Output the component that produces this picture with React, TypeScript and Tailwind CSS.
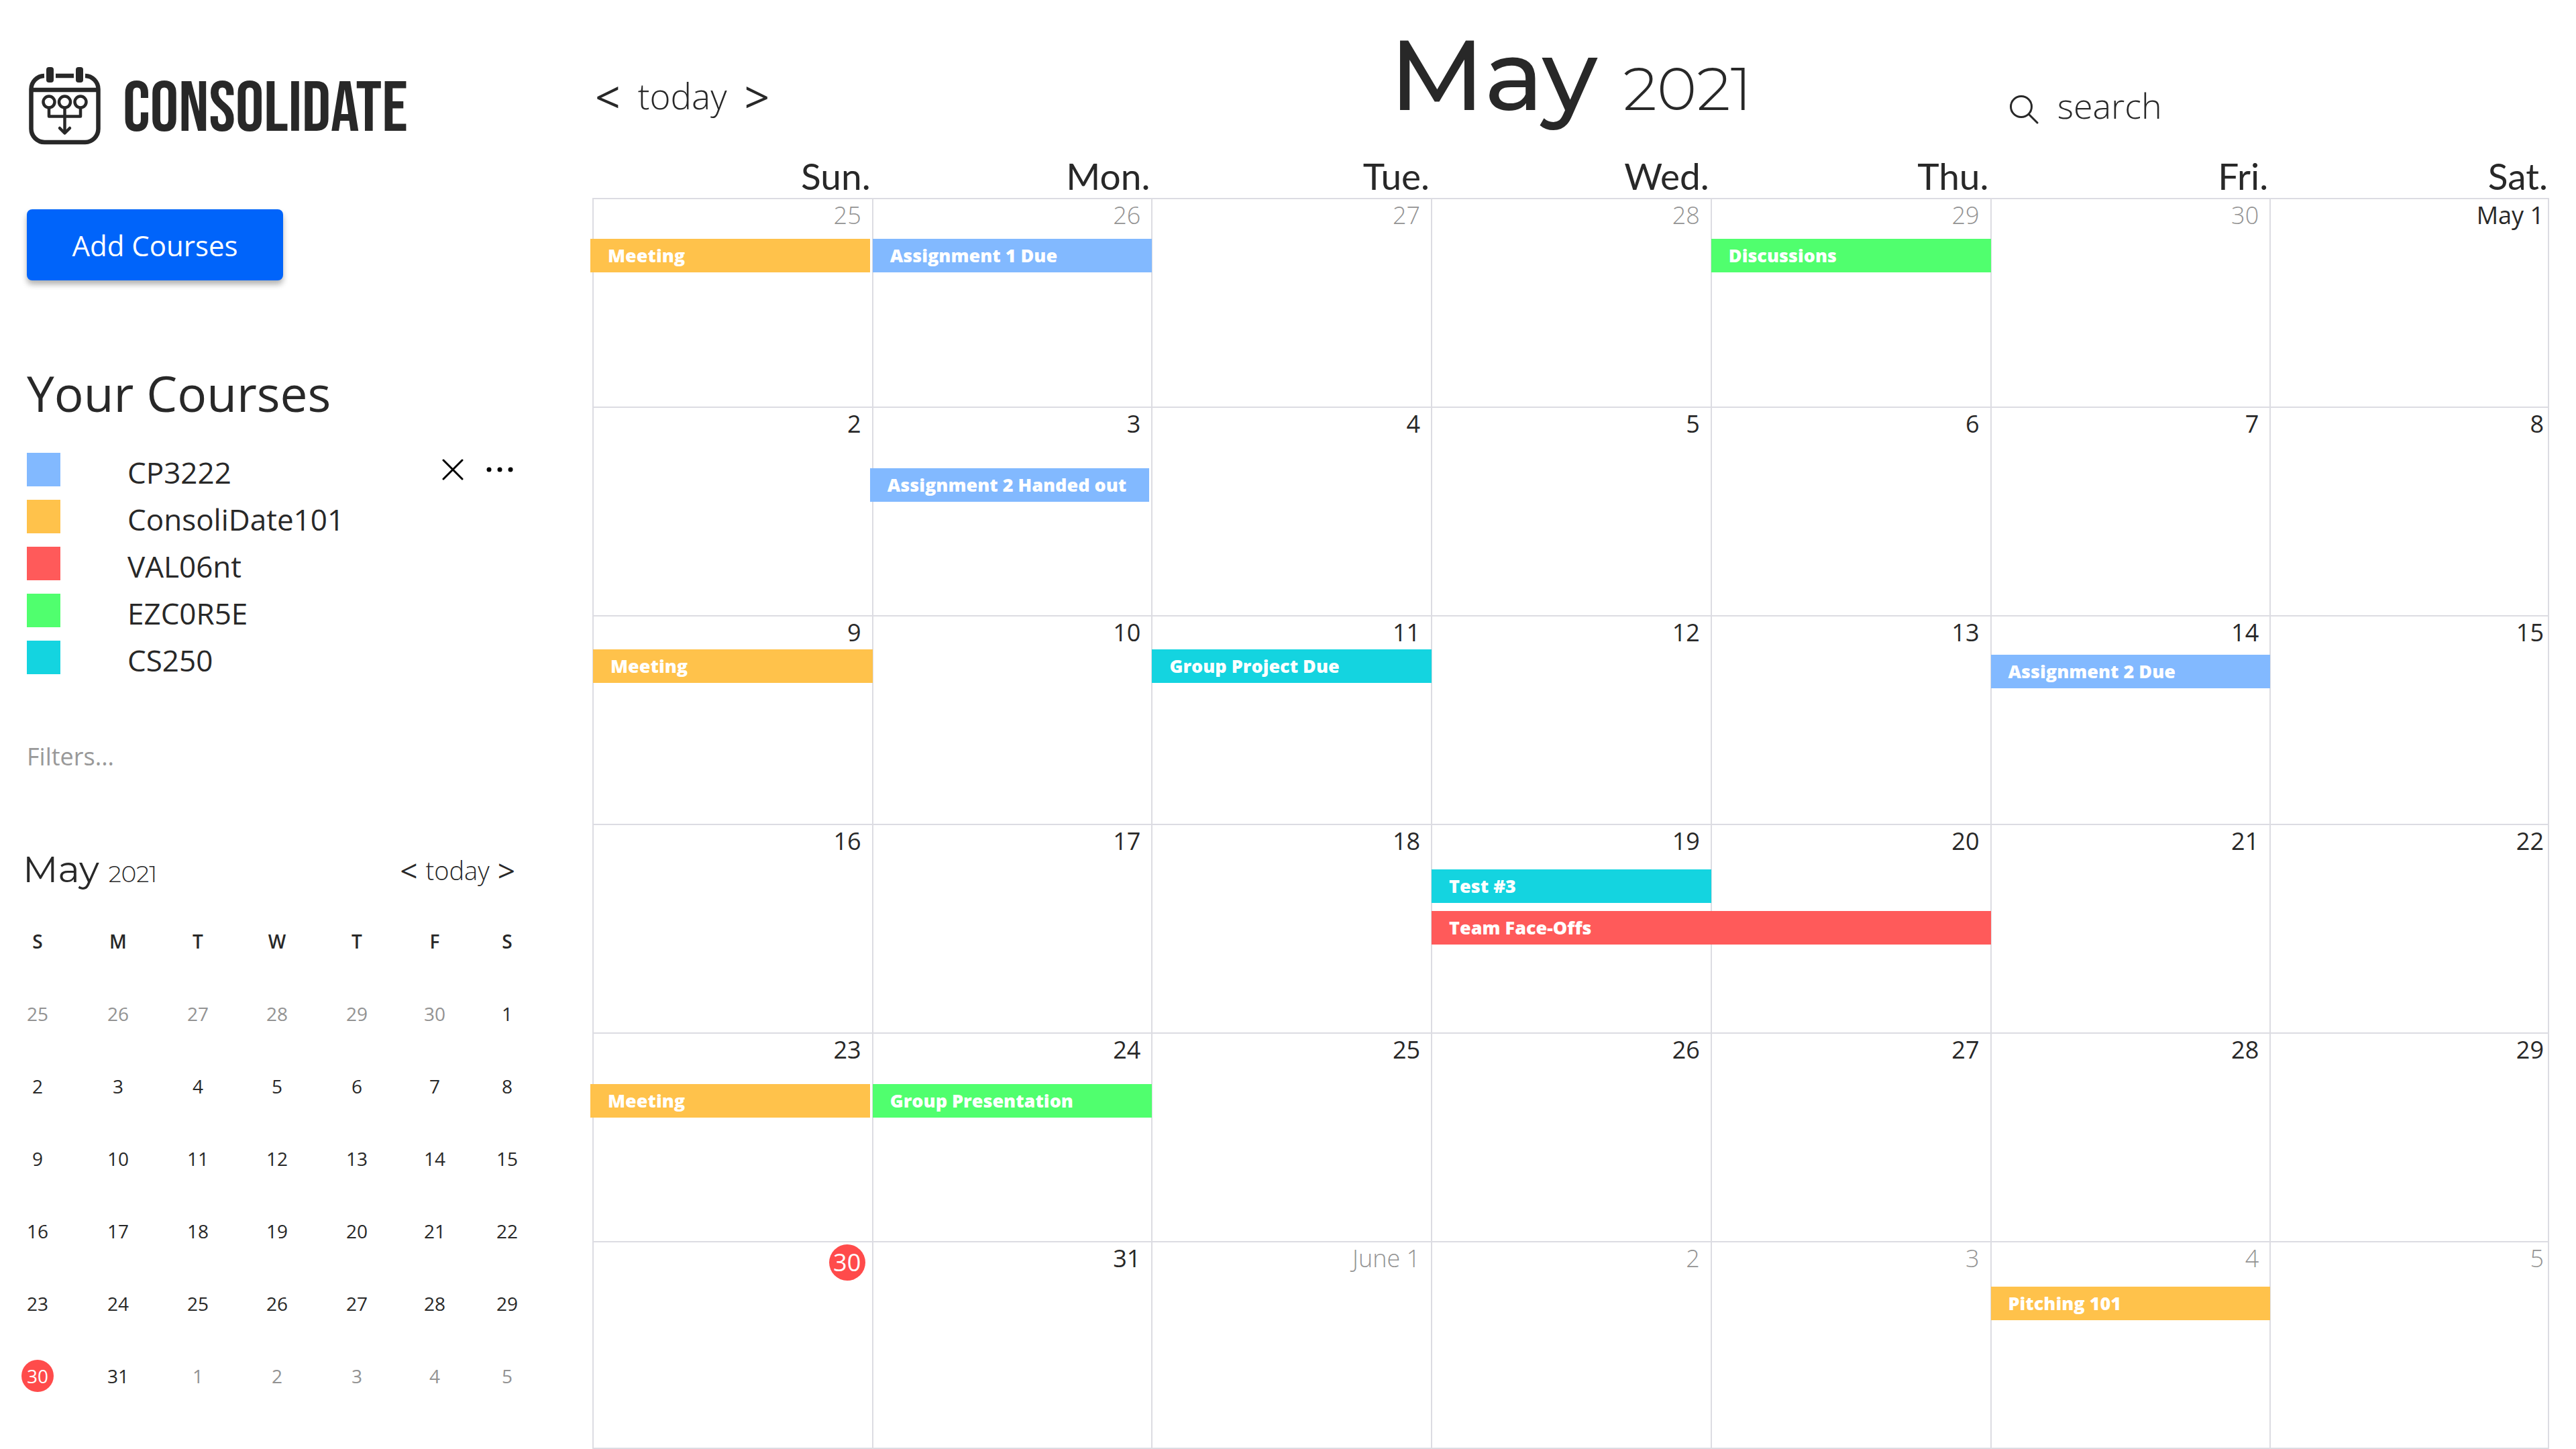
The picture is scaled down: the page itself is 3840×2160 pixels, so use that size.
type Tone = "blue" | "amber" | "red" | "green" | "teal";
type CalEvent = { title: string; tone: Tone; top: string; early?: boolean; wide?: boolean };
type Day = { label: string; muted?: boolean; today?: boolean; events?: CalEvent[] };

const tones: Record<Tone, string> = {
  blue: "bg-[#82b9ff]",
  amber: "bg-[#ffc24b]",
  red: "bg-[#ff5a5a]",
  green: "bg-[#50ff6e]",
  teal: "bg-[#14d4e0]",
};

const courses: { name: string; tone: Tone }[] = [
  { name: "CP3222", tone: "blue" },
  { name: "ConsoliDate101", tone: "amber" },
  { name: "VAL06nt", tone: "red" },
  { name: "EZC0R5E", tone: "green" },
  { name: "CS250", tone: "teal" },
];

const weekdays = ["Sun.", "Mon.", "Tue.", "Wed.", "Thu.", "Fri.", "Sat."];

const d = (label: string | number, ...events: CalEvent[]): Day => ({ label: String(label), events });
const m = (label: string | number, ...events: CalEvent[]): Day => ({ label: String(label), muted: true, events });

const weeks: Day[][] = [
  [
    m(25, { title: "Meeting", tone: "amber", top: "mt-[11px]", early: true }),
    m(26, { title: "Assignment 1 Due", tone: "blue", top: "mt-[11px]" }),
    m(27),
    m(28),
    m(29, { title: "Discussions", tone: "green", top: "mt-[11px]" }),
    m(30),
    d("May 1"),
  ],
  [d(2), d(3, { title: "Assignment 2 Handed out", tone: "blue", top: "mt-[42px]", early: true }), d(4), d(5), d(6), d(7), d(8)],
  [
    d(9, { title: "Meeting", tone: "amber", top: "mt-px" }),
    d(10),
    d(11, { title: "Group Project Due", tone: "teal", top: "mt-px" }),
    d(12),
    d(13),
    d(14, { title: "Assignment 2 Due", tone: "blue", top: "mt-[9px]" }),
    d(15),
  ],
  [
    d(16),
    d(17),
    d(18),
    d(
      19,
      { title: "Test #3", tone: "teal", top: "mt-[18px]" },
      { title: "Team Face-Offs", tone: "red", top: "mt-3", wide: true },
    ),
    d(20),
    d(21),
    d(22),
  ],
  [
    d(23, { title: "Meeting", tone: "amber", top: "mt-[27px]", early: true }),
    d(24, { title: "Group Presentation", tone: "green", top: "mt-[27px]" }),
    d(25),
    d(26),
    d(27),
    d(28),
    d(29),
  ],
  [
    { label: "30", today: true },
    d(31),
    m("June 1"),
    m(2),
    m(3),
    m(4, { title: "Pitching 101", tone: "amber", top: "mt-[18px]" }),
    m(5),
  ],
];

function LogoMark() {
  return (
    <svg viewBox="0 0 108 118" className="h-[118px] w-[108px] shrink-0" fill="none" stroke="#282828" aria-hidden="true">
      <path d="M23 14 A20 20 0 0 0 3.5 34 V93 A20 20 0 0 0 23.5 113 H84 A20 20 0 0 0 103.5 93 V34 A20 20 0 0 0 84 14" strokeWidth="6.5" />
      <path d="M40 14 H67" strokeWidth="6.5" />
      <path d="M3 35 H104" strokeWidth="6.5" />
      <rect x="26" y="1" width="11" height="23" rx="4" fill="#282828" stroke="none" />
      <rect x="70" y="1" width="11" height="23" rx="4" fill="#282828" stroke="none" />
      <circle cx="30" cy="53" r="8.5" strokeWidth="4.5" />
      <circle cx="53.5" cy="53" r="8.5" strokeWidth="4.5" />
      <circle cx="77" cy="53" r="8.5" strokeWidth="4.5" />
      <path d="M30 62 V74.5 H77 V62 M53.5 62 V98" strokeWidth="4.5" strokeLinejoin="round" />
      <path d="M46 92 L53.5 99.5 L61 92" strokeWidth="4.5" strokeLinecap="round" strokeLinejoin="round" />
    </svg>
  );
}

function SearchIcon() {
  return (
    <svg viewBox="0 0 44 44" className="mt-4 size-11 shrink-0" fill="none" stroke="currentColor" strokeWidth="3" strokeLinecap="round" aria-hidden="true">
      <circle cx="18" cy="18" r="15.5" />
      <path d="M29.5 29.5 L42 42" />
    </svg>
  );
}

function Sidebar() {
  return (
    <aside className="w-[884px] shrink-0">
      <div className="mt-[99px] flex h-[118px] items-center gap-8 pl-[43px]">
        <LogoMark />
        <span className="pt-3 font-['Bebas_Neue','Roboto_Condensed','Liberation_Sans_Narrow',sans-serif] text-[106px] leading-[118px]">
          CONSOLIDATE
        </span>
      </div>

      <button
        type="button"
        className="ml-10 mt-[95px] block h-[106px] w-[382px] rounded-lg bg-[#0064fa] text-[42px] text-white shadow-[0_6px_8px_rgba(0,0,0,0.3)]"
      >
        Add Courses
      </button>

      <h2 className="ml-10 mt-[118px] text-[73px] leading-[100px]">Your Courses</h2>

      <ul className="ml-10 mt-[39px] flex w-[725px] flex-col gap-5">
        {courses.map((course, i) => (
          <li key={course.name} className="flex h-[50px] items-center">
            <span className={`size-[50px] ${tones[course.tone]}`} />
            <span className="ml-[100px] mt-2 flex-1 text-[44px] leading-none">{course.name}</span>
            {i === 0 && (
              <span className="flex items-center gap-[34px] text-black">
                <button type="button" aria-label="Remove course">
                  <svg viewBox="0 0 32 32" className="size-8" stroke="currentColor" strokeWidth="3" strokeLinecap="round">
                    <path d="M2 2 L30 30 M30 2 L2 30" />
                  </svg>
                </button>
                <button type="button" aria-label="More options">
                  <svg viewBox="0 0 40 8" className="h-2 w-10" fill="currentColor">
                    <circle cx="4" cy="4" r="3.5" />
                    <circle cx="20" cy="4" r="3.5" />
                    <circle cx="36" cy="4" r="3.5" />
                  </svg>
                </button>
              </span>
            )}
          </li>
        ))}
      </ul>

      <button type="button" className="ml-10 mt-[98px] block text-4xl leading-[50px] text-[#999999]">
        Filters...
      </button>

      <div className="ml-[34px] mt-[103px] flex h-20 w-[734px] items-baseline">
        <h3 className="font-['Montserrat','Inter',sans-serif] text-[55px] leading-[80px]">May</h3>
        <span className="ml-3.5 flex-1 font-['Montserrat','Inter',sans-serif] text-[34px] font-light">2021</span>
        <MonthNav size="small" />
      </div>

      <table className="mt-[13px] w-[804px] table-fixed text-center text-[28px] leading-[40px]">
        <colgroup>
          <col className="w-[112px]" />
          <col className="w-[128px]" />
          <col className="w-[110px]" />
          <col className="w-[126px]" />
          <col className="w-[112px]" />
          <col className="w-[120px]" />
          <col className="w-[96px]" />
        </colgroup>
        <thead>
          <tr className="h-[108px]">
            {weekdays.map((w) => (
              <th key={w} scope="col" className="p-0 font-semibold">
                {w[0]}
              </th>
            ))}
          </tr>
        </thead>
        <tbody>
          {weeks.map((week, i) => (
            <tr key={i} className="h-[108px]">
              {week.map((day, j) => (
                <td key={j} className={`p-0 ${day.muted ? "text-[#939393]" : ""}`}>
                  {day.today ? (
                    <span className="mx-auto grid size-12 place-items-center rounded-full bg-[#ff4b4b] text-white">
                      {day.label}
                    </span>
                  ) : (
                    day.label.replace(/^\D+/, "")
                  )}
                </td>
              ))}
            </tr>
          ))}
        </tbody>
      </table>
    </aside>
  );
}

function MonthNav({ size }: { size: "small" | "large" }) {
  const large = size === "large";
  const arrow = large ? "text-[66px] font-medium" : "text-[46px] font-medium";
  return (
    <nav
      aria-label="Change month"
      className={`flex items-center ${large ? "gap-[26px] text-[53px] leading-[74px]" : "gap-3 text-[38px] leading-[52px]"}`}
    >
      <button type="button" aria-label="Previous month" className={arrow}>
        &lt;
      </button>
      <button type="button" className="font-light">
        today
      </button>
      <button type="button" aria-label="Next month" className={arrow}>
        &gt;
      </button>
    </nav>
  );
}

function EventBar({ event }: { event: CalEvent }) {
  return (
    <button
      type="button"
      className={`relative z-10 block h-[50px] whitespace-nowrap pl-[26px] text-left text-[27px] font-extrabold leading-[50px] text-white ${tones[event.tone]} ${event.top} ${
        event.early ? "-ml-[5px]" : "-ml-px"
      } ${event.wide ? "w-[calc(200%+4px)]" : "w-[calc(100%+2px)]"}`}
    >
      {event.title}
    </button>
  );
}

export default function App() {
  return (
    <div className="flex min-h-screen bg-white font-['Open_Sans',sans-serif] text-[#282828]">
      <Sidebar />
      <main className="-ml-px min-w-0 flex-1 pr-10">
        <header className="grid h-[225px] grid-cols-3">
          <div className="pl-1 pt-[106px]">
            <MonthNav size="large" />
          </div>
          <div className="flex items-baseline justify-center gap-[38px] pt-[26px] font-['Montserrat','Inter',sans-serif]">
            <h1 className="text-[148px] font-medium leading-[170px]">May</h1>
            <span className="text-[90px] font-light">2021</span>
          </div>
          <label className="flex items-start gap-7 pl-[167px] pt-[125px]">
            <SearchIcon />
            <input
              type="search"
              aria-label="Search events"
              placeholder="search"
              className="-mt-1 h-[72px] w-80 bg-transparent text-[52px] font-light placeholder:text-[#282828] placeholder:opacity-100"
            />
          </label>
        </header>

        <table className="w-full table-fixed border-separate border-spacing-0">
          <thead>
            <tr className="h-[70px]">
              {weekdays.map((w) => (
                <th key={w} scope="col" className="p-0 pr-0.5 pt-1 text-right font-['Lato',sans-serif] text-[55px] font-normal leading-[66px]">
                  {w}
                </th>
              ))}
            </tr>
          </thead>
          <tbody>
            {weeks.map((week, i) => (
              <tr key={i} className="group h-[311px] last:h-[310px]">
                {week.map((day, j) => (
                  <td key={j} className="border-l-2 border-t-2 border-[#dcdce2] p-0 align-top last:border-r-2 group-last:border-b-2">
                    <div
                      className={`flex h-12 items-center justify-end text-4xl ${j === 6 ? "pr-1.5" : day.today ? "pr-2.5" : "pr-4"} ${
                        day.muted ? "font-light text-[#939393]" : ""
                      }`}
                    >
                      {day.today ? (
                        <span className="mt-3 grid size-[54px] place-items-center rounded-full bg-[#ff4b4b] text-white">
                          {day.label}
                        </span>
                      ) : (
                        day.label
                      )}
                    </div>
                    {day.events?.map((event) => (
                      <EventBar key={event.title} event={event} />
                    ))}
                  </td>
                ))}
              </tr>
            ))}
          </tbody>
        </table>
      </main>
    </div>
  );
}
